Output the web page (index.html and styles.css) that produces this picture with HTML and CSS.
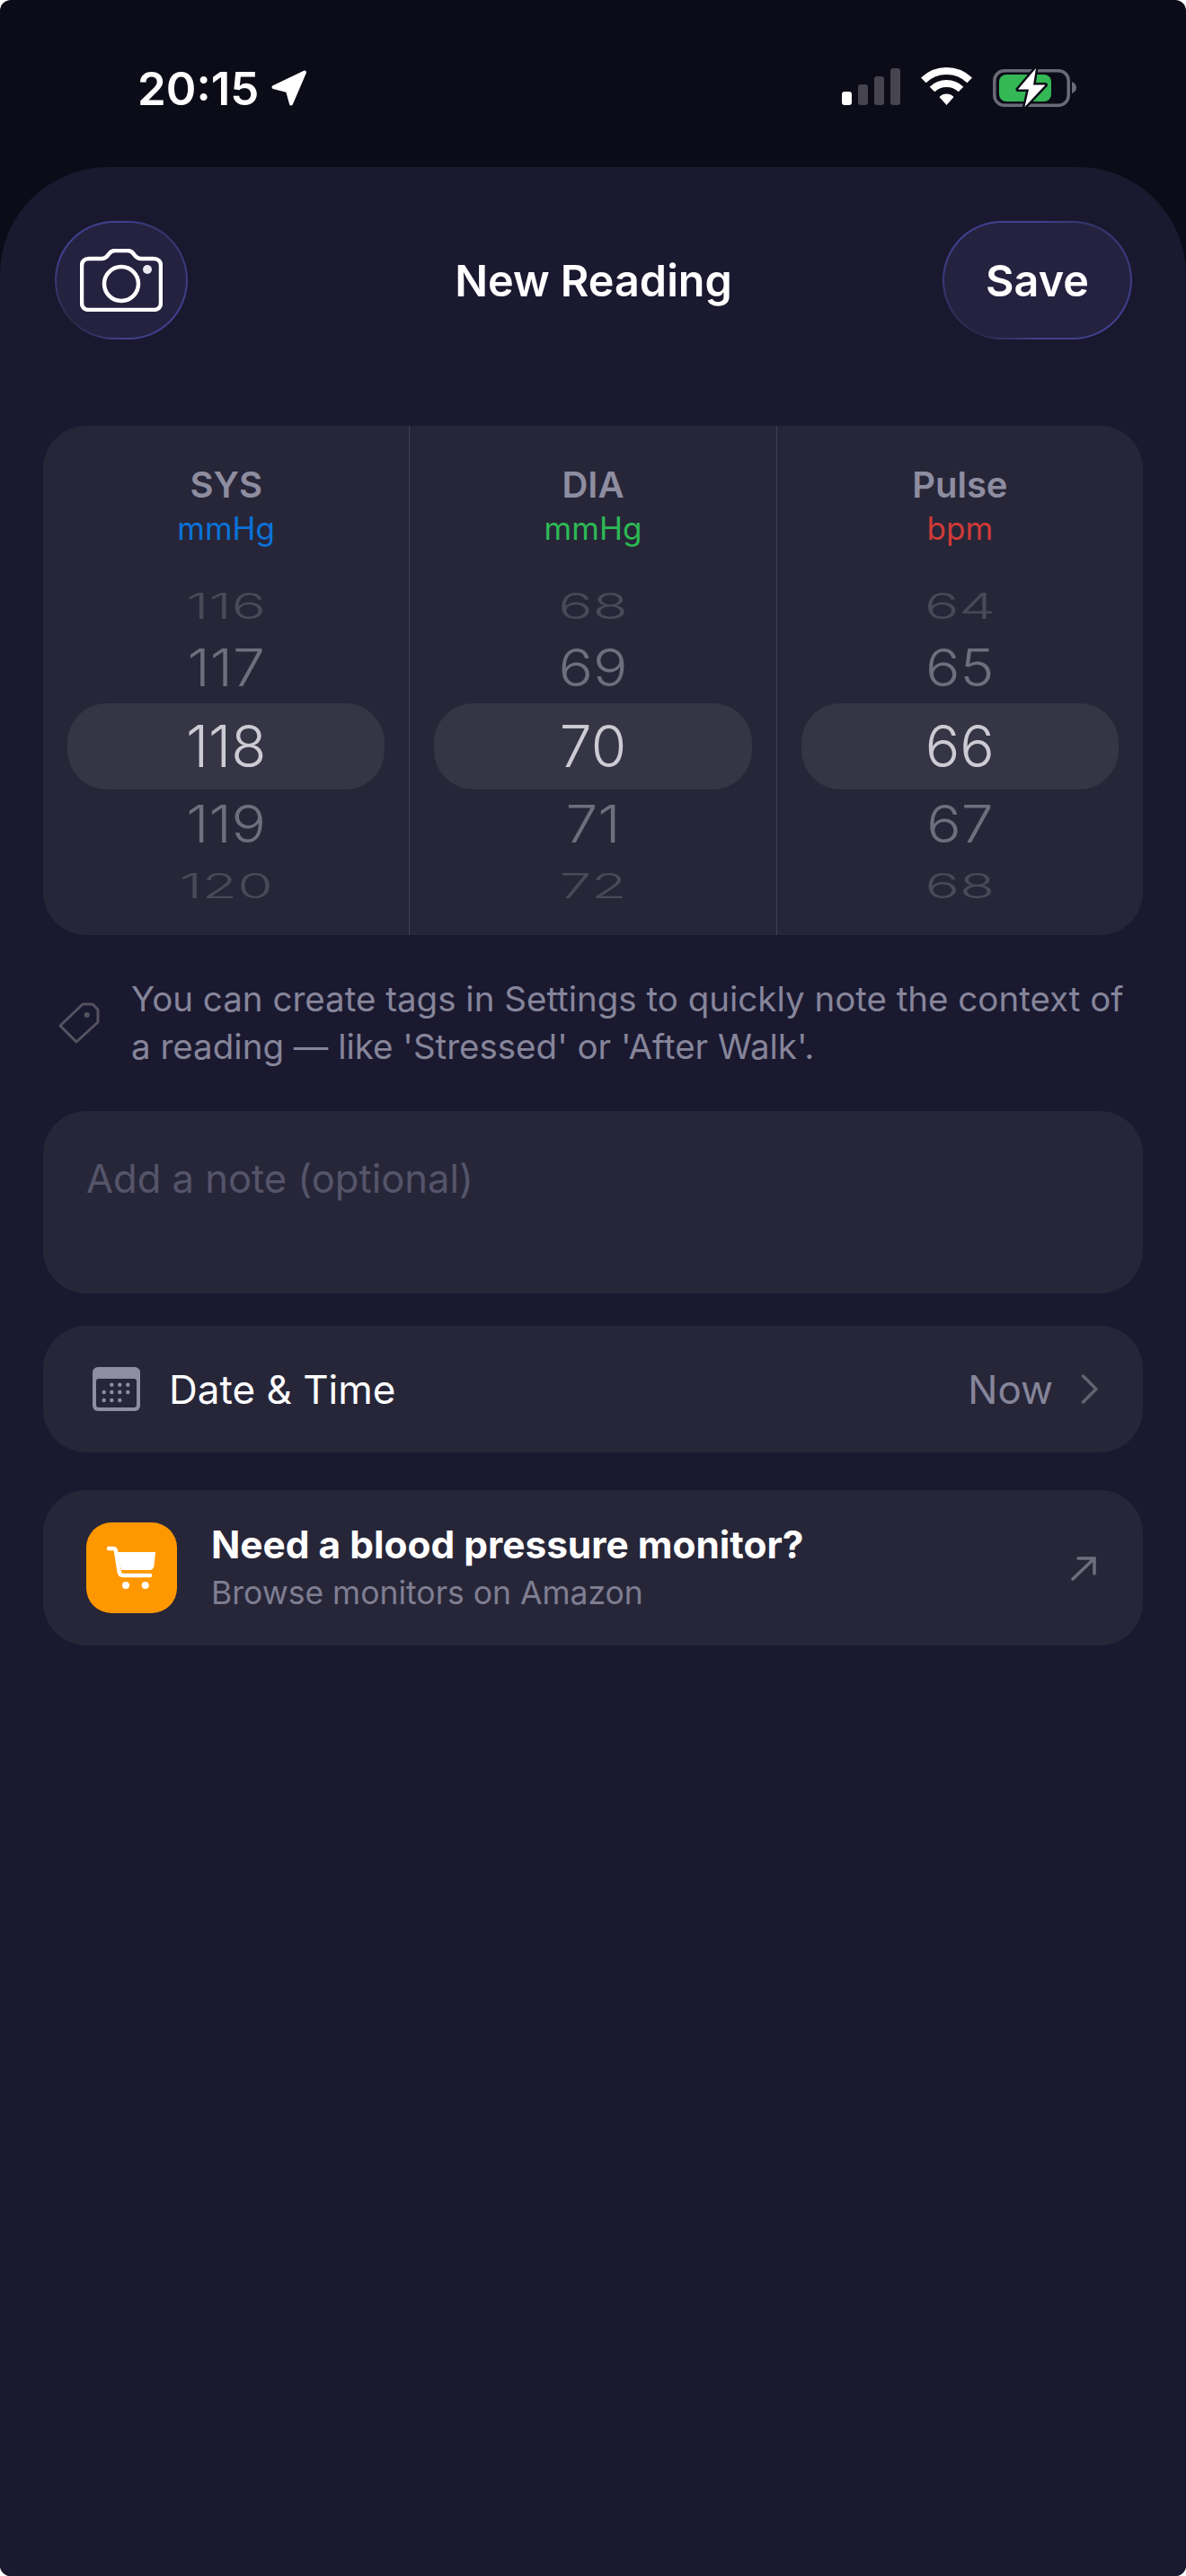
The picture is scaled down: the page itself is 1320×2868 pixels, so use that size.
FILE: index.html
```html
<!DOCTYPE html>
<html lang="en">
<head>
    <meta charset="UTF-8">
    <meta name="viewport" content="width=device-width, initial-scale=1.0">
    <title>New Reading</title>
    <link rel="stylesheet" href="styles.css">
</head>
<body>
    <div class="phone">
        <div class="status">
            <div class="status-left">
                <span class="clock">20:15</span>
                <svg class="icon-loc" width="42" height="42" viewBox="0 0 42 42">
                    <path d="M38 3.500 L3.500 20 L19 24 L23 38.500 Z" fill="#fff" stroke="#fff" stroke-width="4" stroke-linejoin="round"/>
                </svg>
            </div>
            <div class="status-right">
                <svg width="65" height="42" viewBox="0 0 65 42">
                    <rect x="0" y="27" width="11" height="15" rx="3" fill="#fff"/>
                    <rect x="18" y="19" width="11" height="23" rx="3" fill="#45444f"/>
                    <rect x="36" y="10" width="11" height="32" rx="3" fill="#45444f"/>
                    <rect x="54" y="1" width="11" height="41" rx="3" fill="#45444f"/>
                </svg>
                <svg class="icon-wifi" width="57" height="42" viewBox="0 0 57 42">
                    <path d="M2.800 14.400 A37 37 0 0 1 54.200 14.400" fill="none" stroke="#fff" stroke-width="8"/>
                    <path d="M12.500 24.500 A23 23 0 0 1 44.500 24.500" fill="none" stroke="#fff" stroke-width="8"/>
                    <path d="M28.500 42 L20.500 33 A11 11 0 0 1 36.500 33 Z" fill="#fff"/>
                </svg>
                <svg class="icon-battery" width="93" height="45" viewBox="0 0 93 45">
                    <rect x="1.800" y="3.800" width="82.400" height="38.400" rx="11" fill="none" stroke="#6b6b78" stroke-width="3.500"/>
                    <path d="M88 16 Q93 18 93 22.500 Q93 27 88 29 Z" fill="#6b6b78"/>
                    <rect x="7" y="8" width="58" height="30" rx="8" fill="#34b855"/>
                    <path d="M48 1 L28 24.500 H40 L35.500 44 L58.500 19.500 H45 Z" fill="#fff" stroke="#0c0c18" stroke-width="5" stroke-linejoin="round" paint-order="stroke"/>
                </svg>
            </div>
        </div>

        <div class="sheet">
            <header class="topbar">
                <button class="glass cam-btn">
                    <svg width="92" height="70" viewBox="0 0 92 70" fill="none" stroke="#fff" stroke-width="4.500">
                        <path d="M10 11 H24 C28 11 30 9 32 6 C34 3 36 2 39 2 H53 C56 2 58 3 60 6 C62 9 64 11 68 11 H82 C87 11 90 14 90 19 V60 C90 65 87 68 82 68 H10 C5 68 2 65 2 60 V19 C2 14 5 11 10 11 Z"/>
                        <circle cx="46" cy="39" r="19"/>
                        <circle cx="75" cy="23" r="5" fill="#e8e8ee" stroke="none"/>
                    </svg>
                </button>
                <h1 class="title">New Reading</h1>
                <button class="glass save-btn">Save</button>
            </header>

            <section class="picker">
                <div class="col">
                    <div class="col-name">SYS</div>
                    <div class="col-unit blue">mmHg</div>
                    <div class="wheel">
                        <div class="num far top">116</div>
                        <div class="num near">117</div>
                        <div class="num current">118</div>
                        <div class="num near">119</div>
                        <div class="num far bottom">120</div>
                    </div>
                </div>
                <div class="col">
                    <div class="col-name">DIA</div>
                    <div class="col-unit green">mmHg</div>
                    <div class="wheel">
                        <div class="num far top">68</div>
                        <div class="num near">69</div>
                        <div class="num current">70</div>
                        <div class="num near">71</div>
                        <div class="num far bottom">72</div>
                    </div>
                </div>
                <div class="col">
                    <div class="col-name">Pulse</div>
                    <div class="col-unit red">bpm</div>
                    <div class="wheel">
                        <div class="num far top">64</div>
                        <div class="num near">65</div>
                        <div class="num current">66</div>
                        <div class="num near">67</div>
                        <div class="num far bottom">68</div>
                    </div>
                </div>
            </section>

            <div class="tip">
                <svg class="tip-icon" width="46" height="46" viewBox="0 0 46 46" fill="none" stroke="#54535f" stroke-width="3" stroke-linejoin="round">
                    <path d="M27 2 H38 L44 8 V22 L20 44 L2 26 Z"/>
                    <circle cx="31.700" cy="14" r="3" fill="#54535f" stroke="none"/>
                </svg>
                <p>You can create tags in Settings to quickly note the context of a reading — like 'Stressed' or 'After Walk'.</p>
            </div>

            <div class="card note">Add a note (optional)</div>

            <div class="card date-row">
                <svg class="cal" width="53" height="49" viewBox="0 0 53 49">
                    <rect width="53" height="49" rx="6" fill="#8f8ea1"/>
                    <rect x="4" y="13" width="45" height="32" rx="3" fill="#272639"/>
                    <g fill="#8f8ea1">
                        <circle cx="21.300" cy="19.700" r="2.200"/><circle cx="30.300" cy="19.700" r="2.200"/><circle cx="39.300" cy="19.700" r="2.200"/>
                        <circle cx="12.700" cy="28" r="2.200"/><circle cx="21.300" cy="28" r="2.200"/><circle cx="30.300" cy="28" r="2.200"/><circle cx="39.300" cy="28" r="2.200"/>
                        <circle cx="12.700" cy="37" r="2.200"/><circle cx="21.300" cy="37" r="2.200"/><circle cx="30.300" cy="37" r="2.200"/>
                    </g>
                </svg>
                <span class="date-label">Date &amp; Time</span>
                <span class="date-value">Now</span>
                <svg width="19" height="33" viewBox="0 0 19 33" fill="none" stroke="#63626f" stroke-width="3.500" stroke-linecap="round" stroke-linejoin="round">
                    <path d="M2.500 2 L17 16.500 L2.500 31"/>
                </svg>
            </div>

            <div class="card promo">
                <div class="promo-icon">
                    <svg width="101" height="101" viewBox="0 0 101 101">
                        <path d="M25 29 H30 Q32.500 29 33 32 L36.500 54 Q37 59 41 59 H71" fill="none" stroke="#fff" stroke-width="4.500" stroke-linecap="round"/>
                        <path d="M34 33 H77 L75.500 48 Q75 53 70 53 H39 Z" fill="#fff"/>
                        <circle cx="44" cy="70" r="4" fill="#fff"/>
                        <circle cx="65.700" cy="70" r="4" fill="#fff"/>
                    </svg>
                </div>
                <div class="promo-text">
                    <div class="promo-title">Need a blood pressure monitor?</div>
                    <div class="promo-sub">Browse monitors on Amazon</div>
                </div>
                <svg width="28" height="28" viewBox="0 0 28 28" fill="none" stroke="#6f6e7d" stroke-width="3.500" stroke-linecap="round">
                    <path d="M2 26 L26 3 M8 3 H26 V20"/>
                </svg>
            </div>
        </div>
    </div>
</body>
</html>
```
FILE: styles.css
```css
* {
    box-sizing: border-box;
}

html {
    background: #fff;
}

body {
    margin: 0;
    padding: 0;
    font-family: Inter, "Liberation Sans", sans-serif;
    color: #fff;
}

.phone {
    width: 1320px;
    height: 2868px;
    background: #0c0c18;
    border-radius: 12px;
    overflow: hidden;
    display: flex;
    flex-direction: column;
}

/* status bar */
.status {
    height: 186px;
    flex: none;
    display: flex;
    justify-content: space-between;
    padding: 75px 122px 0 153px;
}

.status-left {
    display: flex;
    align-items: flex-start;
    gap: 13px;
}

.clock {
    font-size: 51px;
    font-weight: 600;
    line-height: 48px;
}

.icon-loc {
    margin-top: 2px;
}

.status-right {
    display: flex;
    align-items: flex-start;
    gap: 23px;
}

/* sheet */
.sheet {
    flex: 1;
    background: #1a1930;
    border-radius: 120px 120px 0 0;
    padding: 60px 48px 0;
}

.topbar {
    display: grid;
    grid-template-columns: 1fr auto 1fr;
    align-items: center;
    height: 132px;
    padding: 0 12px 0 13px;
}

.title {
    margin: 0;
    font-size: 48.500px;
    font-weight: 600;
}

.glass {
    height: 132px;
    border: 2px solid transparent;
    border-radius: 66px;
    background:
        linear-gradient(#252240, #252240) padding-box,
        conic-gradient(#40408f 0deg, #35356e 45deg, #40408f 110deg, #40408f 180deg, #2a2845 230deg, #40408f 290deg, #40408f 360deg) border-box;
    box-shadow: 0 0 40px rgba(0, 0, 0, 0.08);
    color: #fff;
    font-family: inherit;
    display: flex;
    align-items: center;
    justify-content: center;
    padding: 0;
}

.cam-btn {
    width: 148px;
    justify-self: start;
}

.save-btn {
    width: 211px;
    justify-self: end;
    font-size: 48.500px;
    font-weight: 600;
}

/* picker */
.picker {
    display: flex;
    height: 567px;
    margin-top: 96px;
    background: #272639;
    border-radius: 48px;
}

.col {
    flex: 1 1 0;
    padding: 42px 27px 0;
    text-align: center;
}

.col + .col {
    border-left: 1px solid #3f3e52;
}

.col-name {
    font-size: 40px;
    font-weight: 600;
    line-height: 48px;
    color: #8e8da0;
}

.col-unit {
    font-size: 35px;
    line-height: 48px;
}

.blue {
    color: #0a73d9;
}

.green {
    color: #2db954;
}

.red {
    color: #d13a38;
}

.wheel {
    margin-top: 33px;
}

.num {
    font-size: 64px;
    font-weight: 300;
}

.far {
    color: #4a4957;
}

.far.top {
    height: 60px;
    line-height: 60px;
    transform: scaleY(0.62);
}

.far.bottom {
    height: 58px;
    line-height: 58px;
    transform: scaleY(0.6);
}

.near {
    height: 78px;
    line-height: 78px;
    color: #6f6e7e;
    transform: scaleY(0.89);
}

.current {
    height: 96px;
    line-height: 96px;
    background: #363546;
    border-radius: 44px;
    color: #cccbd3;
}

/* tip */
.tip {
    display: flex;
    align-items: center;
    gap: 35px;
    margin: 45px 0;
    padding-left: 17px;
}

.tip-icon {
    flex: none;
}

.tip p {
    margin: 0;
    font-size: 38.500px;
    line-height: 53px;
    color: #86859a;
}

/* cards */
.card {
    background: #272639;
    border-radius: 48px;
}

.note {
    height: 203px;
    padding: 50px 48px 0;
    font-size: 43.500px;
    line-height: 50px;
    color: #55546a;
}

.date-row {
    display: flex;
    align-items: center;
    height: 141px;
    margin-top: 36px;
    padding: 0 50px 0 55px;
}

.date-label {
    flex: 1;
    margin-left: 32px;
    font-size: 44px;
}

.date-value {
    margin-right: 31px;
    font-size: 44px;
    color: #86859a;
}

.promo {
    display: flex;
    align-items: center;
    height: 173px;
    margin-top: 42px;
    padding: 0 52px 0 48px;
}

.promo-icon {
    flex: none;
    width: 101px;
    height: 101px;
    background: #ff9800;
    border-radius: 28px;
}

.promo-text {
    flex: 1;
    margin-left: 38px;
}

.promo-title {
    font-size: 42.400px;
    font-weight: 700;
    line-height: 50px;
    margin-top: -2px;
}

.promo-sub {
    margin-top: 8px;
    font-size: 35.500px;
    line-height: 42px;
    color: #7f7e91;
}
```
